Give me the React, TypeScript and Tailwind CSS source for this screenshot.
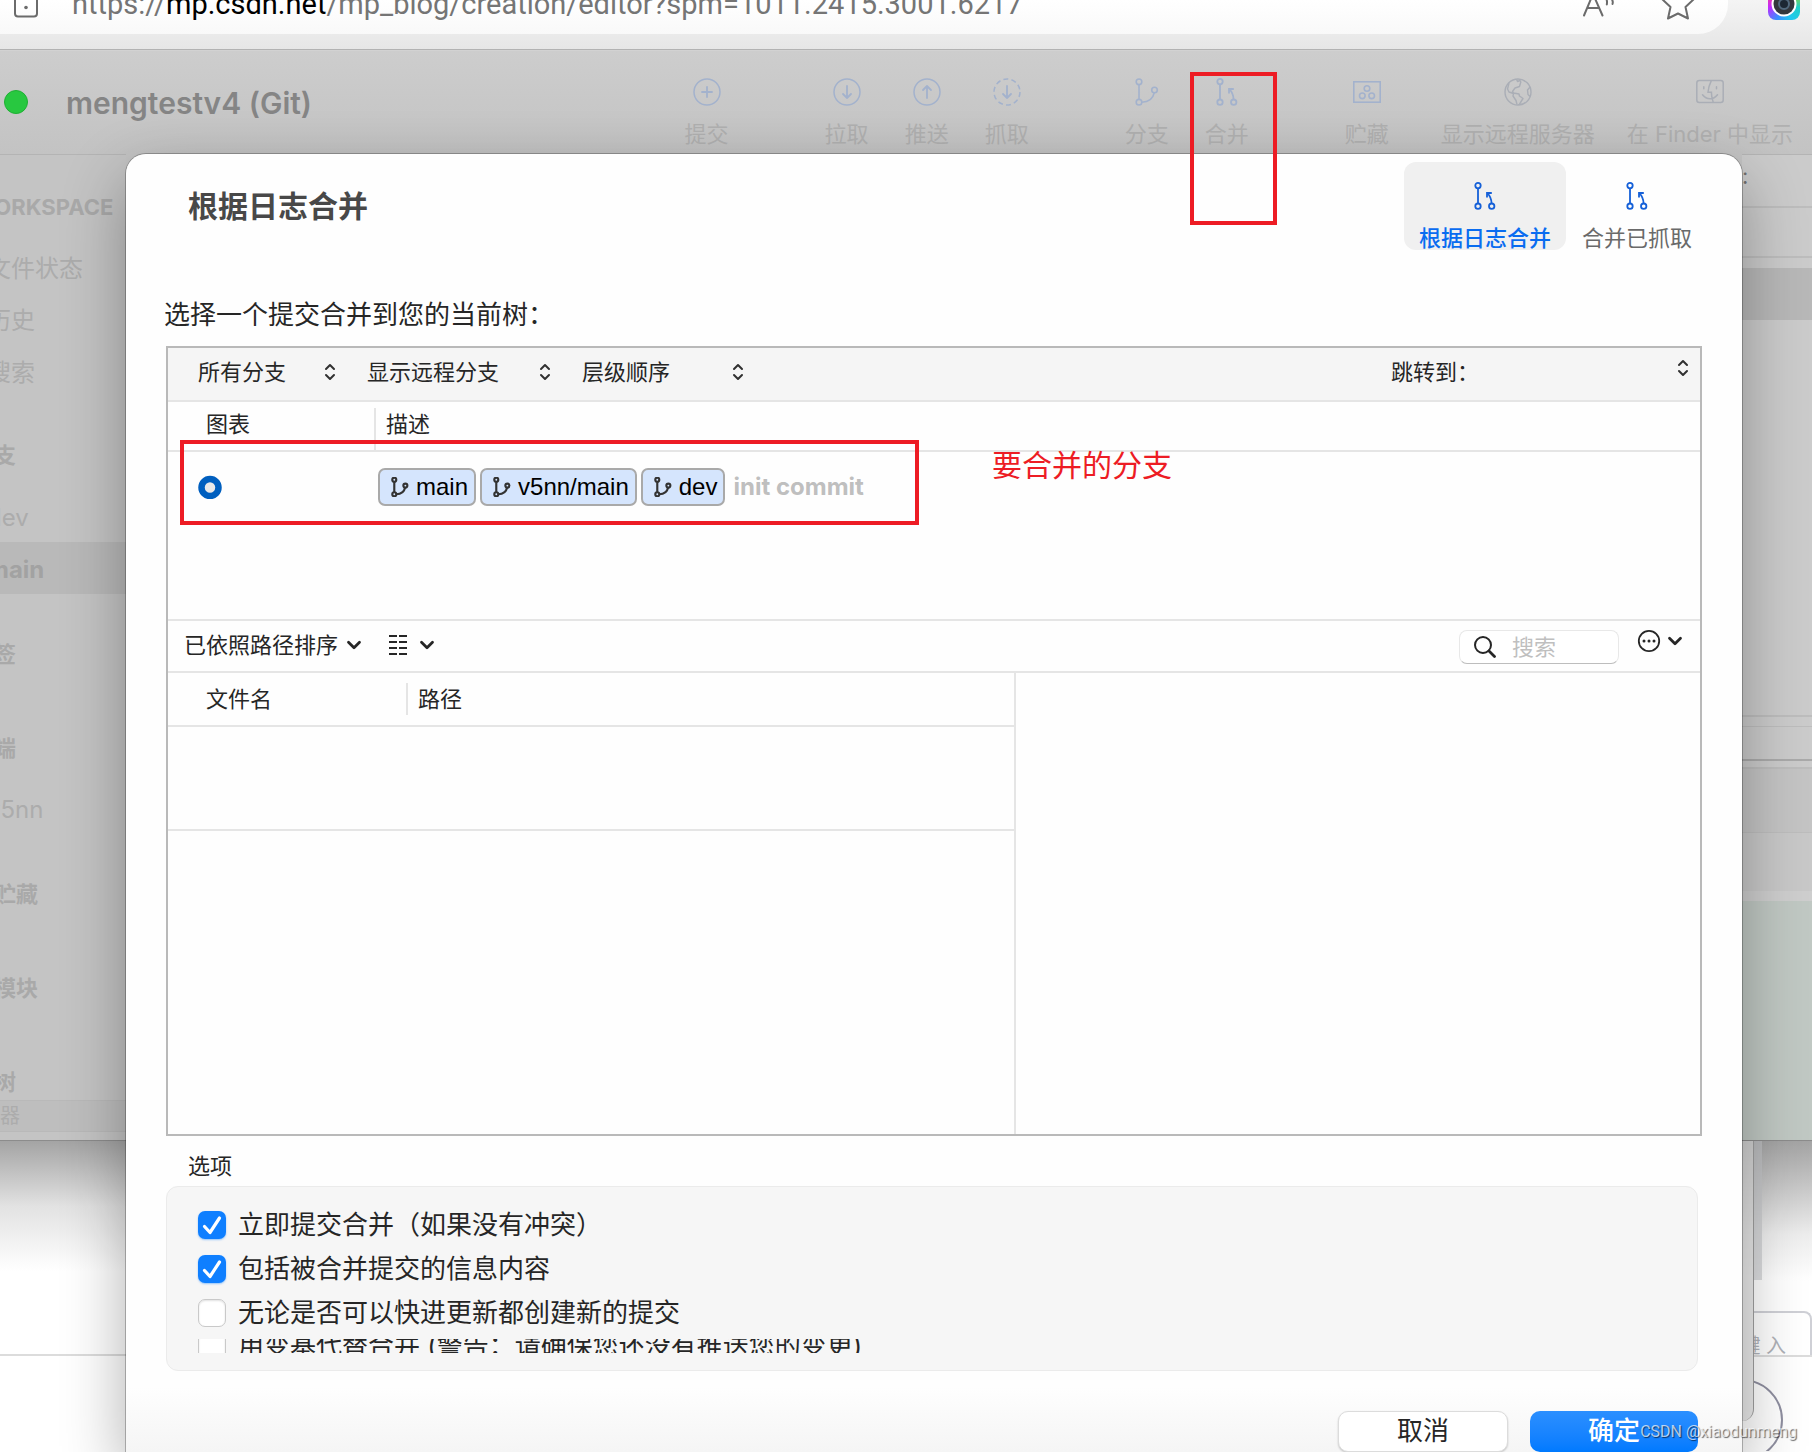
import React, { useState } from 'react';

type IconProps = { className?: string };

const MergeIcon: React.FC<IconProps> = ({ className = '' }) => (
    <svg viewBox="0 0 28 28" fill="none" stroke="currentColor" strokeWidth="1.8" className={`w-7 h-7 ${className}`}>
        <circle cx="7" cy="3.6" r="2.7" />
        <circle cx="7" cy="24.2" r="2.7" />
        <circle cx="20.7" cy="24.2" r="2.7" />
        <path d="M7 6.3V21.5M20.6 21.5C20.4 17 19 13.8 16.4 11.4M16 15.5V11H20.8" />
    </svg>
);

const BranchIcon: React.FC<IconProps & { strokeWidth?: number }> = ({ className = 'w-7 h-7', strokeWidth = 1.6 }) => (
    <svg viewBox="0 0 28 28" fill="none" stroke="currentColor" strokeWidth={strokeWidth} className={className}>
        <circle cx="6" cy="3.8" r="2.8" />
        <circle cx="6" cy="24.2" r="2.8" />
        <circle cx="21.5" cy="12" r="2.8" />
        <path d="M6 6.6V21.4M8.8 24.2C15.5 24 20 20.5 21.2 14.8" />
    </svg>
);

const CircleIcon: React.FC<{ d: string; dashed?: boolean }> = ({ d, dashed }) => (
    <svg viewBox="0 0 28 28" fill="none" stroke="currentColor" strokeWidth="1.5" className="w-7 h-7">
        <circle cx="14" cy="14" r="13" strokeDasharray={dashed ? '5 3.17' : undefined} />
        <path d={d} strokeWidth="1.8" strokeLinecap="round" strokeLinejoin="round" />
    </svg>
);

const StashIcon = () => (
    <svg viewBox="0 0 28 28" fill="none" stroke="currentColor" strokeWidth="1.6" className="w-7 h-7">
        <rect x="0.8" y="3.8" width="26.4" height="20.4" />
        <circle cx="14" cy="10.5" r="2.8" />
        <circle cx="9.3" cy="17.8" r="2.8" />
        <circle cx="18.7" cy="17.8" r="2.8" />
    </svg>
);

const GlobeIcon = () => (
    <svg viewBox="0 0 28 28" fill="none" stroke="currentColor" strokeWidth="1.4" strokeLinejoin="round" className="w-7 h-7">
        <circle cx="14" cy="14" r="13" />
        <path d="M12.500 1.200L13.500 3.500L16 2.500L16.800 4L15.500 8.500L11 10L8.500 13.500L9.500 15L15 16L15.500 18L19 20.500L15 26.800M5 5L3.500 11L5 14L9.500 15.500L9 18L12 22.500L13 26.500M26 9L23.500 12L24 16.500L26 18.500" />
    </svg>
);

const FinderIcon = () => (
    <svg viewBox="0 0 28 28" fill="none" stroke="currentColor" strokeWidth="1.5" strokeLinecap="round" className="w-7 h-7">
        <rect x="0.8" y="2.6" width="26.4" height="21.8" rx="2.5" />
        <path d="M15.2 2.8C13.4 6.5 12.2 10.5 12 14.2H15.4C15.4 17.5 16 21 17.2 24.2M7.8 8.8V10.8M20.5 8.8V10.8M6.5 16.8C10.5 22 17.5 22 21.5 16.8" />
    </svg>
);

const UpDown = () => (
    <svg viewBox="0 0 12 18" fill="none" stroke="#303030" strokeWidth="2" strokeLinecap="round" strokeLinejoin="round" className="w-3 h-[18px] shrink-0 pointer-events-none">
        <path d="M2 6L6 2L10 6M2 12L6 16L10 12" />
    </svg>
);

const ChevronDown = () => (
    <svg viewBox="0 0 16 12" fill="none" stroke="#262626" strokeWidth="2.8" strokeLinecap="round" strokeLinejoin="round" className="w-4 h-3 shrink-0">
        <path d="M2.5 3.2L8 8.7L13.5 3.2" />
    </svg>
);

const ToolbarButton: React.FC<{ label: string; gray?: boolean; children: React.ReactNode }> = ({ label, gray, children }) => (
    <button className="flex flex-col items-center gap-[17px] text-[22px] leading-[22px] text-[#b0b0b0] whitespace-nowrap">
        <span className={gray ? 'text-[#aaaeb6]' : 'text-[#a3b2cd]'}>{children}</span>
        {label}
    </button>
);

const PopUp: React.FC<{ name: string; options: string[]; className: string }> = ({ name, options, className }) => (
    <div className={`flex items-center ${className}`}>
        <select aria-label={name} className="appearance-none flex-1 min-w-0 h-8 bg-transparent outline-none">
            {options.map((o) => (
                <option key={o}>{o}</option>
            ))}
        </select>
        <UpDown />
    </div>
);

const BranchTag: React.FC<{ name: string }> = ({ name }) => (
    <span className="flex items-center h-[38px] pl-2.5 pr-1.5 gap-1.5 rounded-[7px] border-2 border-[#a9a9a9] bg-[#d5e5fd] text-black">
        <BranchIcon className="w-5 h-5 text-[#333]" strokeWidth={3} />
        {name}
    </span>
);

const CheckRow: React.FC<{ label: string; defaultChecked?: boolean }> = ({ label, defaultChecked = false }) => {
    const [checked, setChecked] = useState(defaultChecked);
    return (
        <label className="flex items-center h-11 shrink-0 gap-3 whitespace-nowrap">
            <span className="grid place-items-center">
                <input
                    type="checkbox"
                    checked={checked}
                    onChange={(e) => setChecked(e.target.checked)}
                    className="appearance-none col-start-1 row-start-1 w-7 h-7 rounded-[7px] border border-[#c9c9c9] bg-white shadow-[inset_0_1px_2px_rgba(0,0,0,0.12)] checked:border-transparent checked:bg-[#0f7fff] checked:shadow-[0_1px_2px_rgba(0,122,255,0.4)]"
                />
                {checked && (
                    <svg viewBox="0 0 28 28" fill="none" stroke="#fff" strokeWidth="3.2" strokeLinecap="round" strokeLinejoin="round" className="col-start-1 row-start-1 w-7 h-7 pointer-events-none">
                        <path d="M6.5 15.5L12 21.5L21.5 7" />
                    </svg>
                )}
            </span>
            {label}
        </label>
    );
};

const AddressBar = () => (
    <header className="flex h-[50px] overflow-hidden bg-linear-to-b from-[#f4f4f4] to-[#e6e6e6] border-b border-[#b2b2b2]">
        <div className="flex flex-1 min-w-0 h-[34px] mr-10 pl-3 rounded-br-[30px] bg-linear-to-b from-white to-[#f9f9f9]">
            <svg viewBox="0 0 28 34" fill="none" stroke="#6b6b6b" strokeWidth="2" className="w-7 h-[34px] shrink-0">
                <path d="M3 -2V13.500Q3 16.500 6 16.500H22Q25 16.500 25 13.500V-2" />
                <circle cx="14" cy="7.500" r="1.800" fill="#6b6b6b" stroke="none" />
            </svg>
            <a href="#editor" className="flex-1 min-w-0 ml-8 -mt-2.5 text-[29px] leading-7 text-[#757575] whitespace-nowrap font-['Roboto']">
                https://<span className="text-black">mp.csdn.net</span>/mp_blog/creation/editor?spm=1011.2415.3001.6217
            </a>
            <svg viewBox="0 0 32 34" fill="none" stroke="#6b6b6b" strokeWidth="2" strokeLinecap="round" className="w-8 h-[34px] shrink-0">
                <path d="M1 15.500L10 -6L19.500 15.500M4.500 8H16M23 -2Q24.500 1 23.800 4.500M28 -2Q30.500 1 29.500 4" />
            </svg>
            <svg viewBox="0 0 34 34" fill="none" stroke="#6b6b6b" strokeWidth="2" strokeLinejoin="round" className="w-[34px] h-[34px] ml-[46px] mr-[33px] shrink-0">
                <path d="M17 -13L21.500 -2.500L33 -1L24.500 7L27 18.500L17 13.500L7 18.500L9.500 7L1 -1L12.500 -2.500Z" />
            </svg>
        </div>
        <div className="flex items-center justify-center w-8 h-8 -mt-3 mr-3 rounded-lg bg-[conic-gradient(from_0deg,#f5c518,#9bd42f,#1fd0c8,#22c8f0,#3b8dff,#c02bff,#ff3b8d,#f5c518)]">
            <svg viewBox="0 0 28 28" className="w-7 h-7">
                <circle cx="14" cy="14" r="12.500" fill="#fff" />
                <circle cx="14" cy="14" r="10.500" fill="#33373d" />
                <circle cx="14" cy="14" r="5" fill="#1c2733" stroke="#51687c" strokeWidth="2" />
            </svg>
        </div>
    </header>
);

const AppToolbar = () => (
    <div className="flex items-start h-[104px] pl-1 pr-[19px] border-t border-[#d2d2d2] bg-linear-to-b from-[#cdcdcd] to-[#c3c3c3]">
        <span className="w-6 h-6 mt-[39px] rounded-full bg-[#28c840] border border-[#1fb034] shrink-0" />
        <h1 className="flex-1 ml-[38px] mt-9 text-[30px] leading-8 font-semibold text-[#858585] whitespace-nowrap">mengtestv4 (Git)</h1>
        <div className="flex gap-24 pt-[27px]">
            <ToolbarButton label="提交"><CircleIcon d="M14 9V19M9 14H19" /></ToolbarButton>
            <div className="flex gap-9">
                <ToolbarButton label="拉取"><CircleIcon d="M14 8V20M10 16L14 20L18 16" /></ToolbarButton>
                <ToolbarButton label="推送"><CircleIcon d="M14 20V8M10 12L14 8L18 12" /></ToolbarButton>
                <ToolbarButton label="抓取"><CircleIcon d="M14 8V20M10 16L14 20L18 16" dashed /></ToolbarButton>
            </div>
            <div className="flex gap-9">
                <ToolbarButton label="分支"><BranchIcon /></ToolbarButton>
                <ToolbarButton label="合并"><MergeIcon /></ToolbarButton>
            </div>
            <div className="flex gap-8">
                <div className="mr-5">
                    <ToolbarButton label="贮藏"><StashIcon /></ToolbarButton>
                </div>
                <ToolbarButton label="显示远程服务器" gray><GlobeIcon /></ToolbarButton>
                <ToolbarButton label="在 Finder 中显示" gray><FinderIcon /></ToolbarButton>
            </div>
        </div>
    </div>
);

const sidebarItem = 'flex items-center h-[52px] pt-1 pl-[15px] text-2xl';
const sidebarHeading = 'flex items-center h-8 text-[22px] font-bold text-[#a9a9a9]';

const Sidebar = () => (
    <aside className="flex flex-col w-[126px] shrink-0 overflow-hidden bg-white">
        <nav className="flex flex-col h-[987px] pt-9 border-t border-b border-t-[#b4b4b4] border-b-[#8c8c8c] bg-[#c4c4c4] text-[#acacac] whitespace-nowrap">
            <div className="-ml-7">
                <h2 className={sidebarHeading}>WORKSPACE</h2>
                <div className="mt-[18px]">
                    <div className={sidebarItem}>文件状态</div>
                    <div className={sidebarItem}>历史</div>
                    <div className={sidebarItem}>搜索</div>
                </div>
                <h2 className={`mt-[42px] ${sidebarHeading}`}>分支</h2>
                <div className="mt-[19px]">
                    <div className={sidebarItem}>dev</div>
                    <div className={`bg-[#b9b9b9] font-bold text-[#a2a2a2] ${sidebarItem}`}>main</div>
                </div>
                <h2 className={`mt-11 ${sidebarHeading}`}>标签</h2>
                <h2 className={`mt-[62px] ${sidebarHeading}`}>远端</h2>
                <div className="mt-[18px]">
                    <div className={sidebarItem}>v5nn</div>
                </div>
                <h2 className={`mt-11 ${sidebarHeading}`}>已贮藏</h2>
                <h2 className={`mt-[62px] ${sidebarHeading}`}>子模块</h2>
                <h2 className={`mt-[62px] ${sidebarHeading}`}>子树</h2>
            </div>
            <div className="flex items-center h-8 mt-[2px] -ml-10 text-xl border-y border-[#b9b9b9] bg-[#bebebe]">过滤器</div>
        </nav>
        <div className="h-[130px] bg-linear-to-b from-[#a4a4a4] via-[#e2e2e2] to-white" />
        <div className="h-[83px]" />
        <div className="flex-1 border-t-2 border-[#dcdcdc]" />
    </aside>
);

const WindowEdge = () => (
    <aside className="flex flex-col w-[70px] shrink-0 overflow-hidden bg-white">
        <div className="flex flex-col h-[987px] border-t border-b border-t-[#b4b4b4] border-b-[#8c8c8c] bg-[#cbcbcb]">
            <div className="h-[53px] pt-2.5 border-b-2 border-[#bdbdbd] text-[22px] leading-[22px] text-[#707070]">:</div>
            <div className="h-[50px] border-b-2 border-[#bdbdbd]" />
            <div className="h-[52px] mt-2.5 bg-[#b8b8b8]" />
            <div className="h-[395px]" />
            <div className="h-3 border-t-2 border-b border-[#bdbdbd]" />
            <div className="h-[34px] border-b-2 border-[#aaa]" />
            <div className="h-[66px] mt-[6px] border-t-2 border-b border-[#bdbdbd] bg-[#c4c4c4]" />
            <div className="h-[58px] bg-[#c8c8c8]" />
            <div className="h-2.5 bg-[#cecece]" />
            <div className="flex-1 bg-[#c0c8c3]" />
        </div>
        <div className="flex flex-1 bg-linear-to-b from-[#a4a4a4] from-0% via-[#ededed] via-30% to-white to-45%">
            <div className="w-3 h-[280px] shrink-0 rounded-br-xl border-r border-[#a0a0a0] bg-[#e4e4e4]/70" />
            <div className="flex-1 min-w-0">
                <div className="w-2 h-[139px] bg-[#c4c7ca]/60" />
                <div className="h-11 mt-[31px] pt-[22px] pr-6 overflow-hidden border-t-2 border-r-2 rounded-tr-lg border-[#cfd0d6] text-xl leading-[22px] text-[#b0b2b8]">
                    <div className="flex justify-end whitespace-nowrap">键 入</div>
                </div>
                <svg viewBox="0 0 58 96" fill="none" strokeWidth="2" className="w-[58px] h-24">
                    <path d="M0 0H58" stroke="#dcdcdc" strokeWidth="4" />
                    <circle cx="-12" cy="65" r="40" stroke="#8f8fa0" />
                </svg>
            </div>
        </div>
    </aside>
);

const CommitTable = () => (
    <table className="w-full table-fixed border-collapse text-left">
        <colgroup>
            <col className="w-[206px]" />
            <col />
        </colgroup>
        <thead>
            <tr className="h-[49px] border-b-2 border-[#e5e5e5]">
                <th className="p-0 pl-[38px] pb-1 font-normal">图表</th>
                <th className="p-0 font-normal align-bottom">
                    <div className="flex items-center h-[42px] pb-2.5 pl-2.5 border-l-2 border-[#e5e5e5]">描述</div>
                </th>
            </tr>
        </thead>
        <tbody>
            <tr className="h-[70px]">
                <td className="p-0 pl-[30px]">
                    <svg viewBox="0 0 24 24" className="w-6 h-6">
                        <circle cx="12" cy="12.500" r="8.500" fill="#e9e9e9" stroke="#005fbf" strokeWidth="6.500" />
                    </svg>
                </td>
                <td className="p-0 pl-1 text-2xl font-['Liberation_Sans']">
                    <div className="flex items-center gap-1">
                        <BranchTag name="main" />
                        <BranchTag name="v5nn/main" />
                        <BranchTag name="dev" />
                        <span className="ml-1 font-bold text-[#bfbfbf] font-['Inter']">init commit</span>
                    </div>
                </td>
            </tr>
        </tbody>
    </table>
);

const FileTable = () => (
    <table className="w-full table-fixed border-collapse text-left">
        <colgroup>
            <col className="w-[238px]" />
            <col />
        </colgroup>
        <thead>
            <tr className="h-[53px] border-b-2 border-[#e5e5e5]">
                <th className="p-0 pl-[38px] font-normal">文件名</th>
                <th className="p-0 font-normal">
                    <div className="flex items-center h-8 pl-2.5 border-l-2 border-[#e5e5e5]">路径</div>
                </th>
            </tr>
        </thead>
        <tbody>
            <tr className="h-[104px] border-b-2 border-[#e5e5e5]">
                <td />
                <td />
            </tr>
        </tbody>
    </table>
);

const MergeDialog = () => (
    <main role="dialog" aria-labelledby="merge-title" className="relative z-10 flex-1 min-w-0 px-10 rounded-t-[20px] bg-linear-to-b from-[#fefefe] from-95% to-[#f5f5f5] text-[#262626] shadow-[0_0_0_1px_rgba(0,0,0,0.25),0_24px_64px_rgba(0,0,0,0.32)]">
        {/* Title and tabs */}
        <div className="flex items-center pt-2 pl-[22px] -mr-1.5">
            <h2 id="merge-title" className="flex-1 text-[30px] leading-9 font-bold text-[#484848]">根据日志合并</h2>
            <div className="flex text-[22px] leading-[22px]">
                <button className="flex flex-col items-center h-[88px] px-[15px] pt-5 gap-[17px] rounded-xl bg-[#f0f0f0] font-medium text-[#0a6cf0]">
                    <MergeIcon className="text-[#1560d8]" />
                    根据日志合并
                </button>
                <button className="flex flex-col items-center h-[88px] px-4 pt-5 gap-[17px] text-[#6a6a6a]">
                    <MergeIcon className="text-[#1560d8]" />
                    合并已抓取
                </button>
            </div>
        </div>

        <p className="mt-[51px] -ml-0.5 text-[26px] leading-7">选择一个提交合并到您的当前树：</p>

        {/* Commit browser */}
        <div className="mt-[17px] border-2 border-[#b9b9b9] text-[22px] leading-6">
            <div className="flex items-center h-[54px] pl-[30px] pr-[11px] pb-1 border-b-2 border-[#e5e5e5] bg-[#f5f5f5]">
                <div className="flex flex-1 gap-[31px]">
                    <PopUp name="分支" options={['所有分支', '当前分支']} className="w-[138px]" />
                    <PopUp name="远程分支" options={['显示远程分支', '隐藏远程分支']} className="w-[184px]" />
                    <PopUp name="排序" options={['层级顺序', '日期顺序']} className="w-[162px]" />
                </div>
                <label htmlFor="jump">跳转到：</label>
                <div className="flex items-center w-[210px] pb-2">
                    <select id="jump" className="appearance-none flex-1 min-w-0 h-8 bg-transparent outline-none" />
                    <UpDown />
                </div>
            </div>
            <div className="h-[219px] border-b-2 border-[#e5e5e5]">
                <CommitTable />
            </div>
            <div className="flex items-center h-[52px] pl-4 pr-[17px] pb-0.5 border-b-2 border-[#e5e5e5]">
                <button className="flex items-center gap-2">
                    已依照路径排序
                    <ChevronDown />
                </button>
                <button aria-label="视图" className="flex items-center ml-[27px] gap-3">
                    <svg viewBox="0 0 18 20" stroke="#262626" strokeWidth="2" className="w-[18px] h-5">
                        <path d="M0 1H8M10 1H18M0 7H8M10 7H18M0 13H8M10 13H18M0 19H8M10 19H18" />
                    </svg>
                    <ChevronDown />
                </button>
                <label className="flex items-center w-40 h-[34px] ml-auto mt-1 pl-[14px] rounded-lg border border-[#e8e8e8] border-b-[#bdbdbd] bg-white">
                    <svg viewBox="0 0 22 22" fill="none" stroke="#262626" strokeWidth="2" strokeLinecap="round" className="w-[22px] h-[22px] shrink-0">
                        <circle cx="9" cy="9" r="8" />
                        <path d="M15 15L20.500 20.500" strokeWidth="2.800" />
                    </svg>
                    <input type="text" aria-label="搜索" placeholder="搜索" className="flex-1 min-w-0 ml-4 bg-transparent outline-none placeholder:text-[#bfbfbf]" />
                </label>
                <button aria-label="更多" className="flex items-center ml-[18px] pb-2 gap-1.5">
                    <svg viewBox="0 0 24 24" fill="none" stroke="#262626" strokeWidth="1.800" className="w-6 h-6">
                        <circle cx="12" cy="12" r="10.200" />
                        <path d="M7 12H7.010M12 12H12.010M17 12H17.010" strokeWidth="3" strokeLinecap="round" />
                    </svg>
                    <ChevronDown />
                </button>
            </div>
            <div className="flex h-[461px]">
                <div className="w-[848px] border-r-2 border-[#e5e5e5]">
                    <FileTable />
                </div>
                <div className="flex-1" />
            </div>
        </div>

        {/* Options */}
        <fieldset className="mt-[18px] mr-1">
            <legend className="mb-2 ml-[22px] text-[22px] leading-6">选项</legend>
            <div className="px-[31px] pt-4 pb-[17px] rounded-xl border border-[#ebebeb] bg-[#f6f6f6] text-[26px] leading-8">
                <CheckRow label="立即提交合并（如果没有冲突）" defaultChecked />
                <CheckRow label="包括被合并提交的信息内容" defaultChecked />
                <CheckRow label="无论是否可以快进更新都创建新的提交" />
                <div className="flex items-center h-3.5 mt-1 overflow-hidden">
                    <CheckRow label="用变基代替合并 (警告：请确保您还没有推送您的变更)" />
                </div>
            </div>
        </fieldset>

        <div className="flex justify-end gap-[22px] mt-10 mr-1 text-[26px] leading-8">
            <button className="w-[170px] h-[41px] pb-0.5 rounded-[10px] border border-[#dcdcdc] bg-white shadow-[0_1px_2px_rgba(0,0,0,0.2)]">取消</button>
            <button className="w-[168px] h-[41px] pb-0.5 rounded-[10px] bg-linear-to-b from-[#2b8fff] to-[#007aff] font-medium text-white">确定</button>
        </div>
    </main>
);

const App: React.FC = () => {
    return (
        <div className="relative flex flex-col min-h-screen overflow-hidden bg-white font-['Inter','Noto_Sans_CJK_SC',sans-serif]">
            <AddressBar />
            <AppToolbar />
            <div className="flex flex-1 bg-[#c3c3c3]">
                <Sidebar />
                <MergeDialog />
                <WindowEdge />
            </div>

            {/* Red markup drawn over the windows */}
            <div className="absolute z-20 top-[72px] right-[535px] w-[87px] h-[153px] border-4 border-[#ed1c24]" />
            <div className="absolute z-20 top-[440px] left-[180px] w-[739px] h-[85px] border-4 border-[#ed1c24]" />
            <p className="absolute z-20 top-[447px] left-[992px] text-[30px] leading-9 text-[#ed1c24]">要合并的分支</p>
            <p className="absolute z-20 bottom-2 right-[15px] text-base leading-6 text-white/70 font-['Roboto'] [text-shadow:1px_1px_1px_rgba(0,0,0,0.6)]">CSDN @xiaodunmeng</p>
        </div>
    );
};

export default App;
